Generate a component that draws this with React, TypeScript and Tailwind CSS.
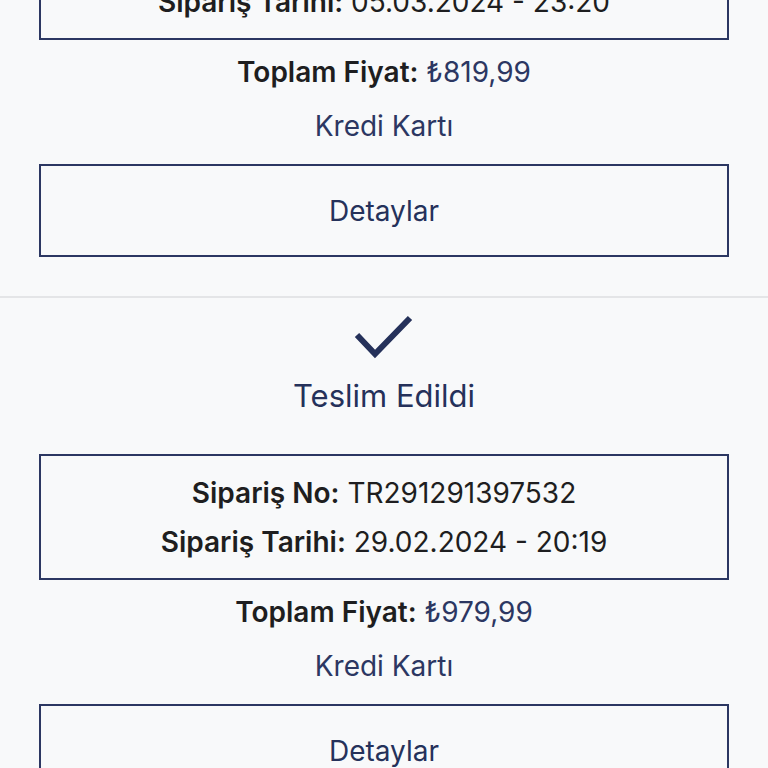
import React from "react";

type Order = {
  no: string;
  date: string;
  total: string;
};

const orders: Order[] = [
  { no: "TR291291397999", date: "05.03.2024 - 23:20", total: "₺819,99" },
  { no: "TR291291397532", date: "29.02.2024 - 20:19", total: "₺979,99" },
];

function Check() {
  return (
    <svg width="60" height="46" viewBox="0 0 60 46" fill="none">
      <polyline
        points="3,21 21,40 56,4"
        stroke="#25315a"
        strokeWidth="6"
        strokeLinecap="butt"
        strokeLinejoin="miter"
      />
    </svg>
  );
}

function OrderSection({ o, first }: { o: Order; first: boolean }) {
  return (
    <div className={first ? "" : "border-t-2 border-[#e4e5e7]"}>
      <div className="flex flex-col items-center pt-[16px]">
        <Check />
        <div className="mt-[16px] text-[31px] leading-[40px] text-[#25315a]">Teslim Edildi</div>
      </div>
      <div className="mx-[39px] mt-[38px] border-2 border-[#2c3762] h-[126px] flex flex-col items-center justify-center gap-[13px] text-[28px] leading-[36px] text-[#1e1e20]">
        <div>
          <span className="font-semibold">Sipariş No:</span> {o.no}
        </div>
        <div>
          <span className="font-semibold">Sipariş Tarihi:</span> {o.date}
        </div>
      </div>
      <div className="mt-[14px] text-center text-[28px] leading-[36px]">
        <span className="font-semibold text-[#1e1e20]">Toplam Fiyat:</span>{" "}
        <span className="text-[#2c3762]">{o.total}</span>
      </div>
      <div className="mt-[18px] text-center text-[28px] leading-[36px] text-[#2c3762]">Kredi Kartı</div>
      <div className="mx-[39px] mt-[20px] h-[93px] border-2 border-[#2c3762] flex items-center justify-center text-[28px] text-[#25315a]">
        Detaylar
      </div>
      <div className="h-[39px]" />
    </div>
  );
}

export default function App() {
  return (
    <div
      className="w-[768px] h-[768px] overflow-hidden bg-[#f8f9fa]"
      style={{ fontFamily: "Inter, 'Noto Sans', sans-serif" }}
    >
      <div className="mt-[-242px]">
        {orders.map((o, i) => (
          <OrderSection key={i} o={o} first={i === 0} />
        ))}
      </div>
    </div>
  );
}
